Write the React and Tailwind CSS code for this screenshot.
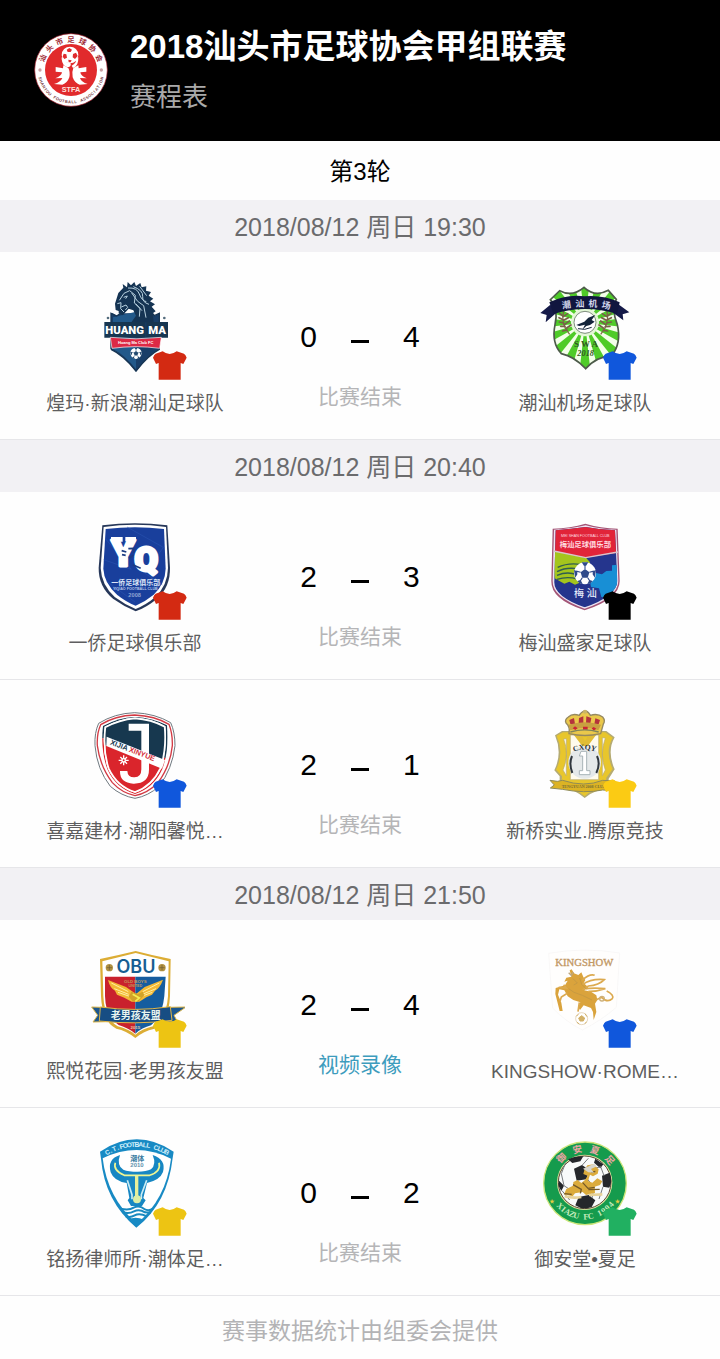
import React from "react";

const SANS = "font-['Liberation_Sans','Noto_Sans_CJK_SC',sans-serif]";

const rounds = [
  {
    time: "2018/08/12 周日 19:30",
    matches: [
      {
        home: { name: "煌玛·新浪潮汕足球队", crest: HuangMa, shirt: "#d32a12" },
        away: { name: "潮汕机场足球队", crest: Airport, shirt: "#1057dc" },
        score: [0, 4],
      },
    ],
  },
  {
    time: "2018/08/12 周日 20:40",
    matches: [
      {
        home: { name: "一侨足球俱乐部", crest: YiQiao, shirt: "#d32a12" },
        away: { name: "梅汕盛家足球队", crest: MeiShan, shirt: "#000000" },
        score: [2, 3],
      },
      {
        home: { name: "喜嘉建材·潮阳馨悦…", crest: XiJia, shirt: "#1057dc" },
        away: { name: "新桥实业.腾原竞技", crest: TengYuan, shirt: "#fbcb14" },
        score: [2, 1],
      },
    ],
  },
  {
    time: "2018/08/12 周日 21:50",
    matches: [
      {
        home: { name: "熙悦花园·老男孩友盟", crest: Obu, shirt: "#edc413" },
        away: { name: "KINGSHOW·ROME…", crest: KingShow, shirt: "#1057dc" },
        score: [2, 4],
        video: true,
      },
      {
        home: { name: "铭扬律师所·潮体足…", crest: ChaoTi, shirt: "#edc413" },
        away: { name: "御安堂•夏足", crest: XiaZu, shirt: "#21b061" },
        score: [0, 2],
      },
    ],
  },
];

export default function App() {
  return (
    <div className={`min-h-screen bg-[#fefefe] ${SANS}`}>
      <header className="flex items-start gap-[22px] bg-black pl-[34px] pr-4 pt-[25px] pb-[25px]">
        <Association />
        <div>
          <h1 className="text-[33px] leading-[44px] font-semibold text-white">
            2018汕头市足球协会甲组联赛
          </h1>
          <p className="mt-[9px] text-[26px] leading-[38px] text-[#a9a9a9]">
            赛程表
          </p>
        </div>
      </header>
      <main>
        <h2 className="pt-[13px] pb-2.5 text-center text-2xl leading-9 text-black">
          第3轮
        </h2>
        {rounds.map((round) => (
          <section key={round.time}>
            <h3 className="bg-[#f2f1f4] pt-[9px] pb-[7px] text-center text-[25px] leading-9 text-[#6b6b6d]">
              {round.time}
            </h3>
            {round.matches.map((match) => (
              <Match key={match.home.name} match={match} />
            ))}
          </section>
        ))}
      </main>
      <footer className="pt-[17px] pb-[10px] text-center text-[23px] leading-9 text-[#b3b3b5]">
        赛事数据统计由组委会提供
      </footer>
    </div>
  );
}

function Match({ match }) {
  return (
    <article className="grid grid-cols-[3fr_2fr_3fr] border-b border-[#e6e6e9] pt-7 pb-5">
      <Team team={match.home} />
      <div className="flex flex-col items-center pt-9">
        <div className="flex items-center justify-center gap-[34px] text-[30px] leading-[42px] text-black">
          <span>{match.score[0]}</span>
          <span className="mt-2 h-[3px] w-[18px] bg-black" />
          <span>{match.score[1]}</span>
        </div>
        {match.video ? (
          <a
            href="#video"
            className="mt-6 text-[21px] leading-[30px] text-[#3d9cbd]"
          >
            视频录像
          </a>
        ) : (
          <p className="mt-6 text-[21px] leading-[30px] text-[#b5b5b7]">
            比赛结束
          </p>
        )}
      </div>
      <Team team={match.away} />
    </article>
  );
}

function Team({ team }) {
  const Crest = team.crest;
  return (
    <div className="flex min-w-0 flex-col items-center">
      <div className="relative size-[100px]">
        <Crest />
        <Shirt color={team.shirt} />
      </div>
      <p className="mt-[9px] max-w-full truncate text-[19px] leading-[30px] text-[#5e5e60]">
        {team.name}
      </p>
    </div>
  );
}

function Shirt({ color }) {
  return (
    <svg
      viewBox="0 0 102 87"
      className="absolute -right-[2px] bottom-0 h-[29px] w-[34px]"
    >
      <path
        d="M29 1Q50 17 71 1L93 8Q98 11 101 20L91 39L83 36V86H17V36L9 39L0 20Q3 11 8 8Z"
        fill={color}
      />
    </svg>
  );
}

// Puts each character on a circle. from/to are degrees, 0 at the top.
function ArcText({ text, cx, cy, r, from, to, size, fill, bottom, weight = 700, family }) {
  const chars = [...text];
  const step = (to - from) / (chars.length - 1);
  return chars.map((c, i) => {
    const a = from + step * i;
    return (
      <text
        key={i}
        x={cx}
        y={bottom ? cy + r : cy - r}
        transform={`rotate(${bottom ? -a : a} ${cx} ${cy})`}
        fontSize={size}
        fontWeight={weight}
        fontFamily={family}
        fill={fill}
        textAnchor="middle"
      >
        {c}
      </text>
    );
  });
}

function Ball({ x, y, r, dark, light = "#fff" }) {
  return (
    <g transform={`translate(${x} ${y}) scale(${r / 10})`}>
      <circle r="10" fill={light} />
      <path d="M0-4L4-1L2.5 4H-2.5L-4-1Z" fill={dark} />
      <path
        d="M-3-10L3-10L1-7H-1ZM10-3L9 4L7 1L7-2ZM-10-3L-9 4L-7 1L-7-2ZM-7 7L-4 6L-2 10L-5 9ZM7 7L4 6L2 10L5 9Z"
        fill={dark}
      />
      <path
        d="M0-4V-8M4-1L8-2M2.5 4L5 8M-2.5 4L-5 8M-4-1L-8-2"
        stroke={dark}
        strokeWidth="1"
      />
    </g>
  );
}

function Association() {
  return (
    <svg viewBox="41 37 222 222" className="mt-2 size-[74px] shrink-0">
      <circle cx="152" cy="148" r="109" fill="#fff" stroke="#a61d2b" strokeWidth="2" />
      <circle cx="152" cy="148" r="78" fill="#e12a2c" />
      <ArcText text="汕头市足球协会" cx={152} cy={148} r={84} from={-67} to={67} size={22} fill="#9d2a35" />
      <ArcText text="SHANTOU FOOTBALL ASSOCIATION" cx={152} cy={148} r={100} from={-75} to={75} size={12} fill="#78383d" bottom />
      <circle cx="59" cy="148" r="5" fill="#c9a0a3" />
      <circle cx="243" cy="148" r="5" fill="#c9a0a3" />
      <circle cx="149" cy="103" r="25" fill="#fff" />
      <path d="M139 87L147 82L155 87L151 94H142ZM130 99L138 101L140 111L132 115L127 108ZM158 100L167 96L172 106L164 115L157 110ZM144 117L154 119L151 125H145Z" fill="#df2a2d" />
      <path d="M124 116Q126 137 143 140Q153 138 151 128L139 125Q136 119 124 110ZM174 110Q175 137 158 142L154 135Q169 128 167 116Z" fill="#fff" />
      <path d="M106 139L128 143L129 134L144 142Q150 153 147 170Q141 187 126 192L101 190Q121 184 126 172L105 173Q124 166 125 155L106 153ZM198 139L175 143L174 134L159 142Q154 153 157 170Q163 187 178 192L202 190Q183 184 179 172L199 173Q181 166 180 155L198 153Z" fill="#fff" />
      <text x="152" y="214" fontSize="22" fontWeight="700" fill="#ffe0dc" textAnchor="middle">
        STFA
      </text>
    </svg>
  );
}

function HuangMa() {
  return (
    <svg viewBox="15 30 300 300" className="size-full">
      <path d="M98 130L112 137L122 130H216L225 137L238 130V238Q205 255 168 305Q130 255 93 238V130Z" fill="#183e68" />
      <path d="M99 142L168 125V298Q136 256 99 237Z" fill="#22598a" />
      <path d="M93 238V130L110 138L125 128M216 128L223 137L238 130V238Q205 255 168 303Q130 255 93 238" fill="none" stroke="#173553" strokeWidth="4" />
      <path d="M105 101L115 69L130 53L128 42L141 52L143 36L153 46L163 36L168 48L181 39L185 52L199 49L198 62L213 66L206 77L220 86L210 94L225 103L215 110L227 124L218 130L221 157H154L168 137L160 121L146 116L137 126L128 136L116 130L116 123L107 120Z" fill="#153453" />
      <path d="M118 91L132 70L149 62L166 76L163 99L180 115L178 140M144 54Q171 52 178 72T199 95M160 50Q190 61 188 79T207 103M179 49L200 77M155 69L173 94L191 107L198 143M167 101L186 122M124 111L138 105L143 112L136 120M112 101L123 98L122 116L132 126M131 82L142 78L137 86" fill="none" stroke="#b8d1df" strokeWidth="3" />
      <path d="M73 156H196V203H73ZM199 156H264V203H199Z" fill="#173651" />
      <g fontFamily="Roboto" fontSize="34" fontWeight="900" fill="#fff" textAnchor="middle">
        <text x="134" y="193">HUANG</text>
        <text x="231" y="193">MA</text>
      </g>
      <path d="M91 202Q168 211 244 202L239 235Q168 225 96 235Z" fill="#dc2945" stroke="#fff" strokeWidth="2" />
      <text x="167" y="222" fontSize="12" fontWeight="700" fill="#fff" textAnchor="middle">Huang Ma Club FC</text>
      <Ball x={168} y={250} r={17} dark="#244b70" />
      <circle cx="84" cy="144" r="4" fill="#536b7c" />
      <circle cx="253" cy="144" r="4" fill="#536b7c" />
    </svg>
  );
}

function Airport() {
  const shield = "M119 62Q157 82 192 52Q225 83 265 61L289 88Q273 116 292 164Q305 220 275 257Q229 260 197 296Q162 259 124 251Q94 220 105 164Q116 116 91 89Z";
  const rays = Array.from({ length: 16 }, (_, i) => i * 22.5);
  return (
    <svg viewBox="45 30 300 300" className="size-full">
      <clipPath id="airport">
        <path d={shield} />
      </clipPath>
      <g clipPath="url(#airport)">
        <rect x="80" y="40" width="230" height="270" fill="#f3ffe9" />
        {rays.map((a) => (
          <path key={a} d="M195 158L178 8H212Z" fill="#4fcb28" transform={`rotate(${a} 195 158)`} />
        ))}
      </g>
      <path d={shield} fill="none" stroke="#4d5b4a" strokeWidth="5" />
      <circle cx="195" cy="157" r="42" fill="#e3f7d6" />
      <circle cx="195" cy="157" r="33" fill="#fff" stroke="#435642" strokeWidth="2" />
      <path d="M169 165L193 155L205 143L226 135L215 150L224 155L210 165L199 168L187 179L195 164L178 168Z" fill="#142439" />
      <path d="M174 176Q194 182 215 172" fill="none" stroke="#142439" strokeWidth="3" />
      <path d="M131 123Q121 163 149 193M261 123Q269 163 242 193" fill="none" stroke="#806548" strokeWidth="4" />
      <path d="M130 139L119 130M129 149L117 143M131 159L118 156M135 169L122 169M141 180L128 183M131 139L143 131M131 151L145 143M134 163L148 153M140 174L153 165M261 139L273 130M262 149L274 143M260 159L274 156M256 170L270 169M250 181L263 183M259 139L247 131M259 151L245 143M256 163L242 153M250 174L237 165" stroke="#786049" strokeWidth="5" strokeLinecap="round" />
      <path d="M91 104L61 129L80 135L77 157L111 127ZM295 103L328 127L308 133L310 151L279 128Z" fill="#151a48" />
      <path d="M88 97Q139 72 193 79Q249 74 299 97L291 132Q196 102 101 132Z" fill="#11163f" />
      <ArcText text="潮汕机场" cx={196} cy={460} r={350} from={-9} to={10} size={27} fill="#d2d5ed" />
      <text x="198" y="230" fontSize="27" fontWeight="700" fontFamily="Liberation Serif" fill="#315823" textAnchor="middle">S W A</text>
      <text x="197" y="258" fontSize="25" fontStyle="italic" fontWeight="700" fontFamily="Liberation Serif" fill="#315823" textAnchor="middle">2018</text>
    </svg>
  );
}

function YiQiao() {
  return (
    <svg viewBox="15 30 300 300" className="size-full">
      <path d="M67 46Q165 33 262 46L270 173Q271 231 231 266Q200 292 167 304Q133 290 99 266Q55 229 56 173Z" fill="#263759" />
      <path d="M71 51Q165 38 258 51L264 174Q263 226 226 261Q199 284 167 297Q135 284 104 261Q64 224 62 174Z" fill="#fff" />
      <path d="M77 57Q165 46 252 57L257 176Q256 220 221 254Q194 276 167 287Q140 277 111 254Q72 218 70 176Z" fill="#193f9c" />
      <path d="M77 87L154 178L71 149M141 51L250 112L195 190L247 225M80 214L165 276" fill="none" stroke="#2c56b3" strokeWidth="3" opacity=".5" />
      <g fill="#fff" fontFamily="Roboto" fontWeight="900" stroke="#fff" strokeWidth="9" strokeLinejoin="round">
        <text x="130" y="168" fontSize="112" textAnchor="middle">Y</text>
        <text x="199" y="184" fontSize="102" textAnchor="middle">Q</text>
      </g>
      <path d="M93 81H128V95H93ZM136 81H168V94H136Z" fill="#fff" />
      <path d="M125 122L139 126M126 134L137 136M145 116L160 115L161 128M147 145L161 135M158 164L182 175" fill="none" stroke="#1d3d83" strokeWidth="5" />
      <text x="167" y="225" fontSize="21" fontWeight="700" fill="#dce4f7" textAnchor="middle">一侨足球俱乐部</text>
      <text x="166" y="239" fontSize="11" fontWeight="700" fill="#bac9ea" textAnchor="middle">YIQIAO FOOTBALL CLUB</text>
      <text x="164" y="260" fontSize="17" fontWeight="700" fill="#8da4d3" textAnchor="middle">2008</text>
    </svg>
  );
}

function MeiShan() {
  const shield = "M107 61Q155 57 197 51Q238 59 285 61L292 213Q290 259 194 292Q99 258 103 213Z";
  return (
    <svg viewBox="45 30 300 300" className="size-full">
      <path d="M98 56Q152 54 196 41Q242 55 293 56L299 213Q299 267 194 301Q92 268 94 213Z" fill="#a35475" />
      <path d="M102 59Q155 56 197 46Q239 58 289 59L295 213Q294 263 194 296Q96 261 98 213Z" fill="#ece3f2" />
      <clipPath id="meishan"><path d={shield} /></clipPath>
      <g clipPath="url(#meishan)">
        <rect x="95" y="45" width="206" height="255" fill="#25358d" />
        <path d="M95 45H300V127L196 143L98 122Z" fill="#e12439" />
        <path d="M96 121L198 143L210 157L200 209L165 224L148 215L133 221L104 205Z" fill="#a4c51d" />
        <path d="M209 208L228 189L246 193L259 183L276 182V166L299 164V270L244 261L237 235L213 231Z" fill="#188fd5" />
      </g>
      <path d="M101 123L197 143L294 126" fill="none" stroke="#dac5cc" strokeWidth="4" />
      <path d="M113 172Q142 158 181 163M111 185Q140 170 176 177M111 196Q142 183 170 194M111 208Q142 198 172 207" fill="none" stroke="#315d50" strokeWidth="4" />
      <Ball x={195} y={190} r={33} dark="#304b8b" />
      <text x="196" y="112" fontSize="22" fontWeight="700" fill="#ffdbe0" textAnchor="middle">梅汕足球俱乐部</text>
      <text x="196" y="82" fontSize="11" fill="#ffdbe0" textAnchor="middle">MEI SHAN FOOTBALL CLUB</text>
      <text x="196" y="260" fontSize="30" fontWeight="500" fill="#e4eafa" textAnchor="middle">梅 汕</text>
    </svg>
  );
}

function XiJia() {
  const inner = "M165 61Q213 64 254 86Q260 156 241 211Q216 264 165 282Q111 265 86 211Q68 156 76 88Q117 65 165 61Z";
  const ring = "M165 57Q216 59 261 82Q268 156 247 213Q221 270 165 288Q107 270 82 213Q61 156 69 84Q115 59 165 57Z";
  return (
    <svg viewBox="15 30 300 300" className="size-full">
      <path d="M164 44Q226 47 272 74Q285 102 285 143Q277 213 237 265Q205 294 165 301Q124 294 91 265Q51 214 45 143Q43 104 56 76Q104 46 164 44Z" fill="#fff" stroke="#6f7980" strokeWidth="3" />
      <path d="M164 51Q225 54 267 79Q278 107 277 143Q271 204 234 254Q203 285 165 293Q126 285 97 254Q60 205 52 143Q50 106 62 80Q105 53 164 51Z" fill="none" stroke="#d33a44" strokeWidth="4" />
      <clipPath id="xijia-ring"><path d={ring} /></clipPath>
      <g clipPath="url(#xijia-ring)">
        <path d="M40 40H290V190L40 112Z" fill="#17384f" />
        <path d="M40 112L290 190V300H40Z" fill="#da252c" />
      </g>
      <path d={inner} fill="#fff" stroke="#fff" strokeWidth="5" />
      <clipPath id="xijia"><path d={inner} /></clipPath>
      <g clipPath="url(#xijia)">
        <path d="M60 50H275V215H60Z" fill="#17384f" />
        <path d="M60 135L270 217V300H60Z" fill="#da252c" />
      </g>
      <path d={inner} fill="none" stroke="#fff" strokeWidth="5" />
      <path d="M146 77H207V214Q207 258 160 257Q119 255 120 219H142Q143 238 162 238Q184 239 184 214V98H146Z" fill="#fff" />
      <path d="M80 116L255 186L246 212L79 144Z" fill="#fff" />
      <g transform="rotate(21 90 137)" fontSize="22" fontWeight="700">
        <text x="90" y="139" fill="#17384f">XIJIA</text>
        <text x="150" y="139" fill="#d42e39">XINYUE</text>
      </g>
      <g stroke="#fff" strokeWidth="4">
        <path d="M131 172V202M116 187H146M121 177L141 197M121 197L141 177" />
        <circle cx="131" cy="187" r="5" fill="#da252c" />
      </g>
    </svg>
  );
}

function TengYuan() {
  return (
    <svg viewBox="45 30 300 300" className="size-full">
      <path d="M105 112L126 99H259L284 118Q260 160 284 214L266 242V274Q224 274 194 300Q164 273 119 266V235L103 217Q128 165 105 112Z" fill="#b5ab72" />
      <path d="M110 113L129 103H256L278 119Q254 160 278 213L259 239L256 268Q220 271 194 295Q166 271 124 264L126 235L108 215Q133 165 110 113Z" fill="#e8c62c" />
      <path d="M131 123Q149 169 129 216L139 233V122ZM256 120Q238 169 256 216L247 233V119ZM151 111H174L195 148L215 111H236V245H151Z" fill="#fffbed" stroke="#b8ab74" strokeWidth="2" />
      <path d="M160 109H183L195 130L206 109H230L195 155Z" fill="#e1bd35" />
      <circle cx="194" cy="193" r="49" fill="#e5e9ea" />
      <path d="M183 160H200V218H210V230H178V218H188V174H178Z" fill="#fff" stroke="#a8b3b7" strokeWidth="3" />
      <path d="M156 174Q146 198 157 225M231 174Q242 198 229 225" fill="none" stroke="#30373e" strokeWidth="6" />
      <ArcText text="CXQY" cx={194} cy={240} r={85} from={-17} to={17} size={23} fill="#28313a" family="Liberation Serif" />
      <path d="M90 247L112 250L128 247Q193 269 248 247L284 249L268 263L281 278L248 276Q194 287 127 274L91 270L103 261Z" fill="#dcb324" stroke="#8f8b58" strokeWidth="3" />
      <text x="191" y="271" fontSize="12" fontWeight="700" fontFamily="Liberation Serif" fill="#776c36" textAnchor="middle">TENGYUAN 2008 CLUB</text>
      <path d="M147 107Q151 86 138 75Q133 65 145 57Q157 45 178 52Q182 43 195 38Q207 42 211 52Q233 45 248 57Q257 68 250 78L242 107Q195 118 147 107Z" fill="#eac84b" stroke="#968960" strokeWidth="4" />
      <path d="M148 66L162 60L165 78L151 78ZM177 60L190 55V76L176 76ZM199 55L214 60L211 76H198ZM226 61L240 66L236 79H223Z" fill="#b5343c" />
      <path d="M145 80Q195 65 243 80L235 97Q195 83 151 97Z" fill="#c9a040" />
      <path d="M158 91L165 85L173 91L166 96ZM189 86H203V95H189ZM221 87L229 92L221 98L215 91Z" fill="#cb2434" />
      <path d="M151 102Q194 89 236 102" fill="none" stroke="#81845b" strokeWidth="4" />
      <circle cx="195" cy="41" r="6" fill="#cbb566" />
    </svg>
  );
}

function Obu() {
  return (
    <svg viewBox="15 27 300 300" className="size-full">
      <path d="M60 60Q118 48 167 36Q216 49 272 60L270 171Q266 252 221 270Q192 276 166 297Q139 275 109 269Q66 248 63 171Z" fill="#dcad35" />
      <path d="M67 67Q118 54 167 42Q216 54 266 67L264 172Q259 240 219 262Q187 269 166 287Q146 270 113 262Q73 238 70 172Z" fill="#fff" />
      <path d="M75 113H166V284Q146 267 116 258Q77 235 75 171Z" fill="#c9212d" />
      <path d="M166 113H257L253 171Q246 235 213 259Q186 266 166 284Z" fill="#155d9f" />
      <text x="168" y="101" fontSize="54" fontWeight="600" fontFamily="Inter" fill="#165e93" textAnchor="middle">OBU</text>
      {[88, 246].map((x) => (
        <g key={x}>
          <circle cx={x} cy="86" r="11" fill="#b29141" />
          <path d={`M${x - 8} 86H${x + 8}M${x} 78V94`} stroke="#695c38" strokeWidth="2" />
        </g>
      ))}
      <text x="166" y="132" fontSize="13" fontWeight="700" fill="#c39a5c" textAnchor="middle">OLD BOYS</text>
      <text x="166" y="145" fontSize="11" fontWeight="700" fill="#c39a5c" textAnchor="middle">UNITED</text>
      <path d="M84 123L138 144L168 165L194 144L249 122Q240 147 225 155L216 167L199 175L178 188H155L133 176L111 167L105 155Q90 147 84 123Z" fill="#f3b936" />
      <path d="M94 132L145 158M103 149L146 166M114 160L154 174M238 132L188 158M228 149L187 166M217 160L179 174" stroke="#fff0a2" strokeWidth="3" />
      <path d="M154 158L174 165L188 158L193 169L176 187H158L146 173Z" fill="#d2a328" />
      <path d="M158 166L178 177L166 187" fill="none" stroke="#f5ed51" strokeWidth="5" />
      <path d="M35 204L66 205V234L82 248L39 249L53 229ZM318 204L265 205V234L253 248L293 249L282 229Z" fill="#1c578f" stroke="#dcb548" strokeWidth="3" />
      <path d="M61 204Q166 219 271 203L276 244Q166 258 58 246Z" fill="#174d83" stroke="#e1b646" strokeWidth="3" />
      <text x="167" y="240" fontSize="30" fontWeight="700" fill="#e8f4ef" textAnchor="middle">老男孩友盟</text>
      <text x="166" y="269" fontSize="13" fontWeight="700" fill="#e8c6a9" textAnchor="middle">2015</text>
    </svg>
  );
}

function KingShow() {
  return (
    <svg viewBox="45 27 300 300" className="size-full">
      <path d="M86 43Q192 24 299 42L289 205Q246 243 187 273Q134 246 98 207Z" fill="#fffefd" stroke="#f6f4f4" strokeWidth="2" />
      <text x="193" y="81" fontSize="32" fontWeight="500" fontFamily="Liberation Serif" fill="#c29865" stroke="#c29865" strokeWidth="1" textAnchor="middle">KINGSHOW</text>
      <path d="M149 94L155 91L162 103L175 108L184 100L190 114L196 123L191 132L204 144L193 154L213 158L229 169L232 183L225 194L229 219L221 243L219 219L213 207L191 199L180 213L174 204L181 190L160 183L143 172L133 154L118 151L114 167L124 191L128 216H119L106 165L107 147L135 139L143 125L133 128L139 116L154 113Z" fill="#daa33c" />
      <path d="M187 137Q215 118 253 122Q237 139 205 141L194 149Q225 146 256 149Q229 158 205 157M187 123Q210 103 224 109M116 145L139 147L131 137M142 163L124 174L120 187M178 190L174 218M229 182L245 175Q262 193 277 179Q284 168 260 156" fill="none" stroke="#dcaa50" strokeWidth="5" />
      <path d="M159 119L172 132L161 138M179 117L185 136L200 151M146 149L162 160L187 169L216 183" fill="none" stroke="#c79a42" strokeWidth="3" />
      <path d="M146 101L154 109L160 99" fill="none" stroke="#bda67e" strokeWidth="4" />
      <circle cx="246" cy="179" r="7" fill="none" stroke="#cdb07a" strokeWidth="4" />
      <circle cx="185" cy="239" r="18" fill="#fff" stroke="#dbc4a0" strokeWidth="2" />
      <path d="M185 230L194 237L190 246H180L176 237ZM169 232L175 226M195 224L201 233M171 250L178 255M194 254L200 249" fill="#d2b067" stroke="#d2b067" strokeWidth="3" />
    </svg>
  );
}

function ChaoTi() {
  return (
    <svg viewBox="15 30 300 300" className="size-full">
      <path d="M60 77Q170 3 281 77L278 96Q263 232 169 305Q74 225 63 98Z" fill="#188ac4" />
      <path d="M68 97Q171 47 273 98Q258 220 170 293Q82 216 68 97Z" fill="#fff" />
      <ArcText text="C.T.FOOTBALL CLUB" cx={171} cy={233} r={171} from={-30} to={30} size={20} fill="#d4f0fb" />
      <path d="M120 87Q81 99 92 139Q102 166 140 171L148 216L143 223L153 240H186L197 223L190 216L201 171Q240 162 249 138Q259 100 218 87Q230 116 213 130Q199 137 173 137Q145 137 130 131Q109 118 120 87Z" fill="#1787c3" />
      <path d="M106 110Q98 132 133 148H209Q244 136 237 110" fill="none" stroke="#eff693" strokeWidth="5" />
      <path d="M170 150V219" fill="none" stroke="#e5ef9b" strokeWidth="10" />
      <path d="M142 163L156 206V220M200 163L184 206V220" fill="none" stroke="#c9ecf4" strokeWidth="5" />
      <circle cx="171" cy="220" r="12" fill="#dbeea7" />
      <text x="172" y="106" fontSize="21" fontWeight="700" fill="#397c9f" textAnchor="middle">潮体</text>
      <text x="171" y="124" fontSize="18" fontWeight="700" fill="#6193ad" textAnchor="middle">2010</text>
      <path d="M122 248Q147 254 161 245Q178 237 193 249Q205 257 219 248M127 258Q146 265 162 256Q178 248 195 259L212 260M137 271Q151 276 164 268Q178 260 201 271" fill="none" stroke="#1889c0" strokeWidth="6" />
      <path d="M146 280Q166 270 192 281L169 302Z" fill="#188ac4" />
    </svg>
  );
}

function XiaZu() {
  return (
    <svg viewBox="45 30 300 300" className="size-full">
      <circle cx="195" cy="172" r="124" fill="#159b4d" stroke="#cce67a" strokeWidth="4" />
      <circle cx="194" cy="169" r="83" fill="#e3e4a2" />
      <circle cx="194" cy="169" r="79" fill="#f8fafa" stroke="#594b37" strokeWidth="3" />
      <path d="M162 128L186 117L208 132L199 160L170 164ZM144 100Q168 88 190 91L181 106L157 111ZM117 164L132 179L124 195Q112 177 117 164ZM246 149L269 140Q279 165 268 185L249 182ZM176 213L206 207L226 223L215 243Q189 254 166 238ZM226 98L250 115L241 127L222 110Z" fill="#25272b" />
      <path d="M137 110L124 143L132 179L162 199M187 117L205 97M208 132L242 122L252 149M201 158L223 184L216 216M249 182L237 219M126 194L149 222" fill="none" stroke="#777b7e" strokeWidth="3" />
      <path d="M193 132L202 118L220 115L236 130L233 143L219 151L210 146L204 165L217 170L232 157L247 166L240 177L224 182L225 201L198 207L188 198L165 202L158 211L132 205L139 189L159 179L160 168L173 162L184 171L195 162L203 149L190 144Z" fill="#dbab3c" />
      <path d="M203 122L213 130M214 139L226 136M159 176L184 190L181 202M188 170L204 187L224 184M205 191L239 190M133 203L155 205" fill="none" stroke="#735928" strokeWidth="4" />
      <path d="M189 128L222 113L231 121L213 129L222 140L205 139Z" fill="#d8d6cb" />
      <path d="M134 211Q160 218 184 213M207 207L247 205" fill="none" stroke="#e7d39b" strokeWidth="8" />
      <ArcText text="御安夏足" cx={194} cy={170} r={92} from={-43} to={48} size={28} fill="#f0a5a7" />
      <ArcText text="XIAZU FC 1994" cx={194} cy={169} r={111} from={-46} to={50} size={25} fill="#c6edbd" family="Liberation Serif" bottom />
      <text x="88" y="232" fontSize="16" fill="#e5cc42">★</text>
      <text x="284" y="232" fontSize="16" fill="#e5cc42">★</text>
    </svg>
  );
}
